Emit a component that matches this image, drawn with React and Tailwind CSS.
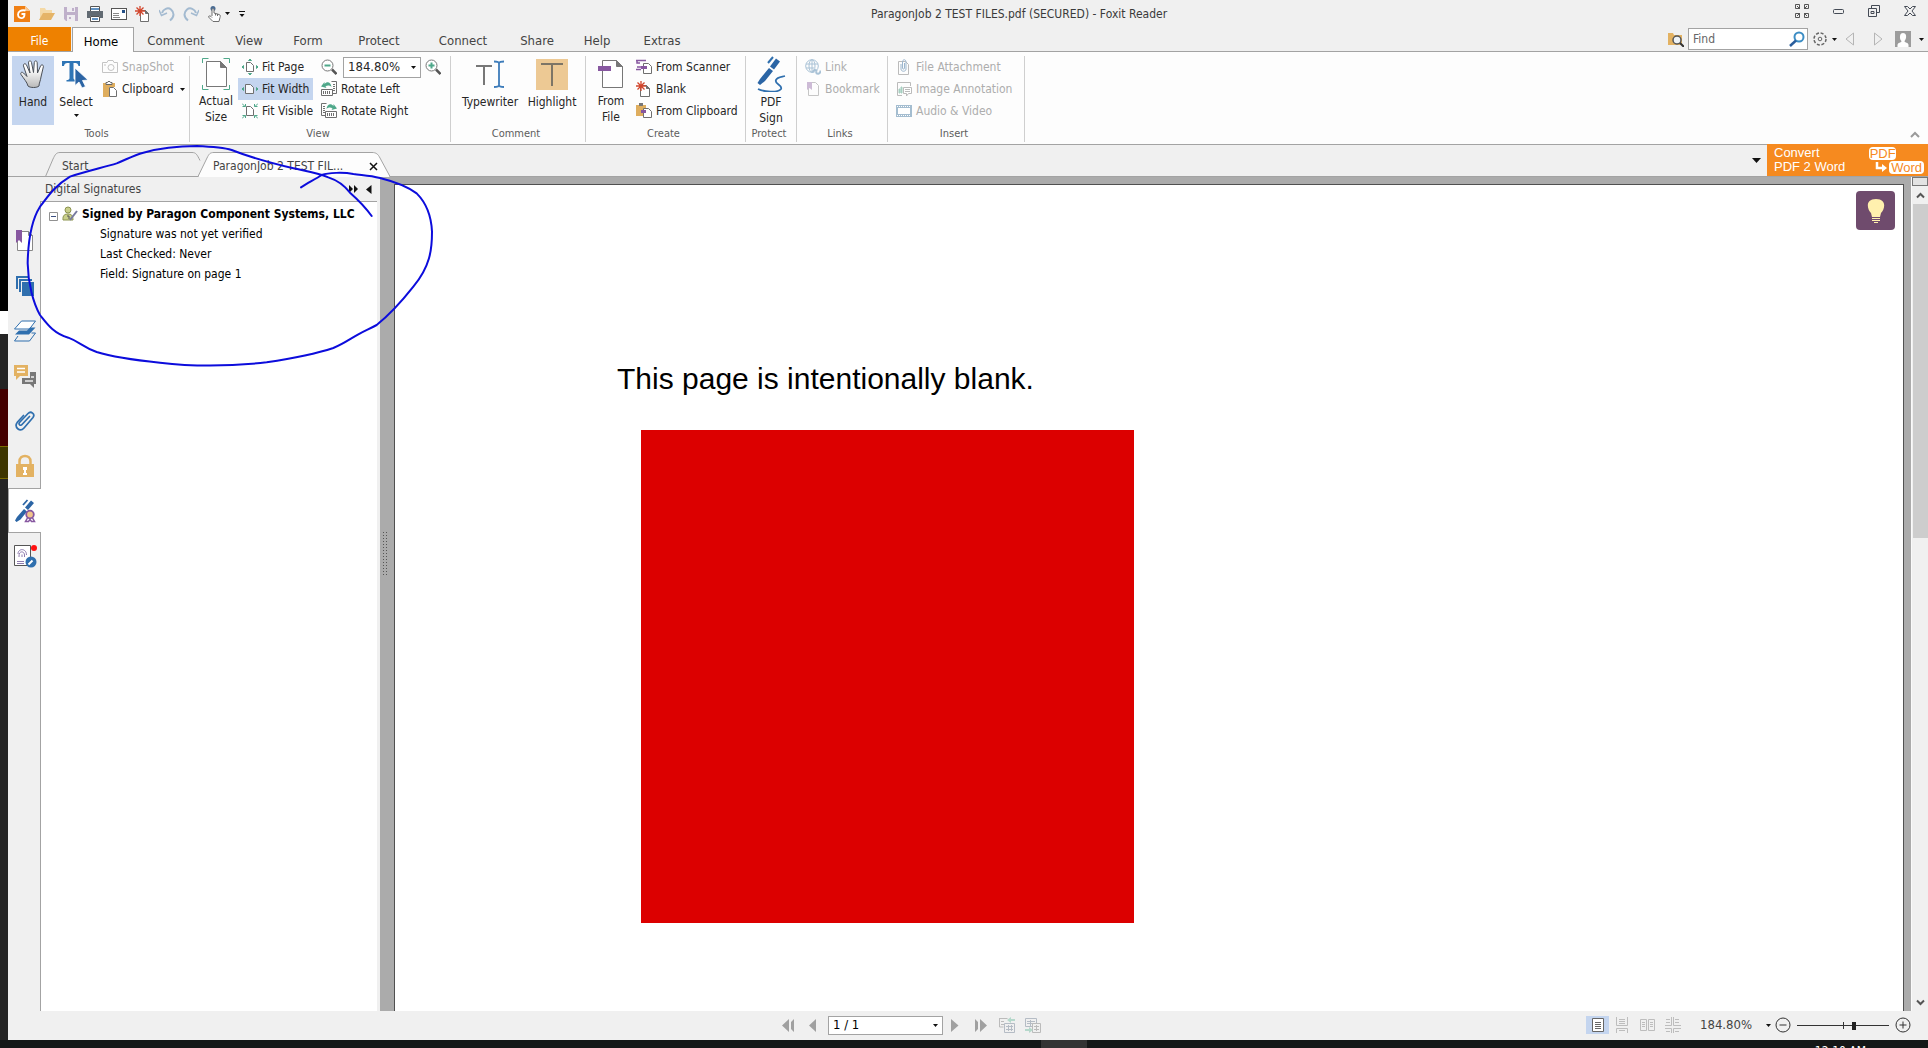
import React, { useState } from 'react';

const GREY = '#6f6f6f';
const GREEN = '#4fa88a';
const BLUE = '#2f6fae';
const PURPLE = '#8757a0';
const SAND = '#e3b262';

function Svg({ w = 16, h = 16, children, className = '', sw = 1 }) {
  return (
    <svg width={w} height={h} viewBox={`0 0 ${w} ${h}`} fill="none" stroke={GREY} strokeWidth={sw} className={`shrink-0 ${className}`} aria-hidden="true">
      {children}
    </svg>
  );
}

function Caret({ className = '' }) {
  return (
    <svg width="5" height="3" viewBox="0 0 5 3" className={`shrink-0 ${className}`} aria-hidden="true">
      <path d="M0 0h5L2.5 3z" fill="#111" />
    </svg>
  );
}

// small page outline with a folded corner
const pageAt = (x, y, w, h, f = 4) => `M${x} ${y}h${w - f}l${f} ${f}v${h - f}h${-w}z`;
const foldAt = (x, y, w, f = 4) => `M${x + w - f} ${y}l${f} ${f}h${-f}z`;

function Burst({ x = 5, y = 5 }) {
  return (
    <g transform={`translate(${x} ${y})`} stroke="#d2452c" strokeWidth="1.3">
      <path d="M0-5V5M-5 0H5M-3.5-3.5l7 7M3.5-3.5l-7 7" />
    </g>
  );
}

const icons = {
  logo: (
    <Svg w={18} h={18} className="-ml-px">
      <path d="M1 1h11l5 5v11H1z" fill="#f07f13" stroke="none" />
      <path d="M12 1l5 5h-5z" fill="#fbc890" stroke="none" />
      <path d="M12.500 5.500C8 4.500 5 6.500 5 9.500S7.500 13.500 9.500 13 11.500 11 11.500 9H8.500" stroke="#fff" strokeWidth="1.800" />
    </Svg>
  ),
  open: (
    <Svg>
      <path d="M1 13V2h5l1 2h6v3H5z" fill="#f4d9a6" stroke="none" />
      <path d="M0 14l4-7h12l-4 7z" fill="#e5b467" stroke="none" />
    </Svg>
  ),
  save: (
    <Svg>
      <path d="M1 1h14v14H3l-2-2z" fill="#bfb0ca" stroke="none" />
      <path d="M4 1h8v5H4zM4 9h8v6H4z" fill="#efedf1" stroke="none" />
      <path d="M9 2h2v3H9zM6 11v2h2v-2z" fill="#bfb0ca" stroke="none" />
    </Svg>
  ),
  print: (
    <Svg>
      <path d="M3.500 5V.5h9V5M3.500 10.500v5h9v-5z" fill="#fff" stroke="#555" />
      <path d="M0 5h16v7h-3v-2H3v2H0z" fill="#626b73" stroke="none" />
      <path d="M4 3h8M5 13h6" stroke={BLUE} strokeWidth="1.500" />
    </Svg>
  ),
  mail: (
    <Svg>
      <rect x=".5" y="2.500" width="15" height="11" fill="#fff" stroke="#555" />
      <path d="M2 7.500h6M2 9.500h6M2 11.500h7" stroke="#888" />
      <path d="M11 4h3v3h-3z" fill="#244f86" stroke="none" />
    </Svg>
  ),
  fresh: (
    <Svg>
      <path d={pageAt(5.5, 4.5, 8, 11, 3)} fill="#fff" />
      <path d={foldAt(5.5, 4.5, 8, 3)} fill={GREY} />
      <Burst x={5} y={5} />
    </Svg>
  ),
  undo: (
    <Svg sw={2}>
      <path d="M3 7C4 3 9 1 12 3.500s4 7-1 11" stroke="#a3bad0" />
      <path d="M0 4l2.500 5.500L8 7" stroke="#a3bad0" strokeWidth="1.500" />
    </Svg>
  ),
  redo: (
    <Svg sw={2}>
      <path d="M13 7C12 3 7 1 4 3.500s-4 7 1 11" stroke="#a3bad0" />
      <path d="M16 4l-2.500 5.500L8 7" stroke="#a3bad0" strokeWidth="1.500" />
    </Svg>
  ),
  touch: (
    <Svg>
      <circle cx="6" cy="2.500" r="2.500" fill="#4a6c93" stroke="none" />
      <path d="M5 10V3.500c0-1 2-1 2 0V7l5 1.500c1.500.5 1.500 1.500 1 3l-1 4H6L1.500 11c0-1.500 2-1.500 3.500.5M8.500 7.500v2M10.500 8v2" fill="#fff" />
    </Svg>
  ),
  more: (
    <Svg w={8} h={8}>
      <path d="M1 1.500h6" stroke="#111" />
      <path d="M1.500 4h5L4 7z" fill="#111" stroke="none" />
    </Svg>
  ),
  hand: (
    <Svg w={28} h={30}>
      <defs>
        <linearGradient id="palm" x1="0" y1="0" x2="0" y2="1">
          <stop offset="0.300" stopColor="#fff" />
          <stop offset="1" stopColor="#b8b8b8" />
        </linearGradient>
      </defs>
      <path
        d="M9 27C8 23 5 20 2 15.500 1 13.500 3 12.500 4.500 14L8 17.500 4.500 7C4 4.500 6.500 4 7.500 6L11 14 9.500 4C9.300 1.500 12 1 12.500 3.500L14.500 13.500 15.300 3.500C15.500 1.200 18.300 1.500 18.200 3.800L18.500 14 21.500 7C22.500 5 25 6 24.300 8L22 18C21.500 22 20 24 20 27 18 29 11 29 9 27z"
        fill="url(#palm)"
        stroke="#4b5058"
      />
    </Svg>
  ),
  select: (
    <Svg w={28} h={30}>
      <path d="M0 2h18v5h-1.500c-.5-2.500-1.500-3-5-3v15c0 1.500 1 2 3 2v1.500H4.500V21c2 0 3-.5 3-2V4c-4 0-5 .5-5.500 3H0z" fill="#2f75b5" stroke="none" />
      <path d="M13 9l13 12-5.500.5 3 6-3.500 1.500-3-6-4 3.500z" fill="#2b64a4" stroke="#fff" strokeWidth=".8" />
    </Svg>
  ),
  camera: (
    <Svg>
      <path d="M.5 3.500H5l1-2h5l1 2h3.500v10H.5z" stroke="#c4c4c4" />
      <circle cx="9" cy="8.500" r="3" stroke="#c4c4c4" />
      <path d="M2 6h2" stroke="#c4c4c4" />
    </Svg>
  ),
  clipboard: (
    <Svg>
      <path d="M1 2h12v4H7v10H1z" fill="#dfae5f" stroke="none" />
      <path d="M4 3.500V1.500h1.500C5.500 0 8.500 0 8.500 1.500H10v2z" fill="#fff" stroke="#666" />
      <path d={pageAt(7.500, 6.500, 7, 9, 3)} fill="#fff" />
    </Svg>
  ),
  actual: (
    <Svg w={28} h={32}>
      <path d="M.5 5V.5h6M21.500.5h6V5M.5 27v4.500h6M21.500 31.500h6V27" stroke={GREEN} />
      <path d={pageAt(4.500, 3.500, 20, 25, 6)} fill="#fff" stroke="#777" />
      <path d={foldAt(4.500, 3.500, 20, 6)} fill="#777" stroke="#777" />
    </Svg>
  ),
  fitPage: (
    <Svg>
      <path d={pageAt(4.500, 3.500, 7, 9, 3)} fill="#fff" />
      <path d="M6.500 1.500L8 0l1.500 1.500zM6.500 14.500L8 16l1.500-1.500zM1.500 6.500L0 8l1.500 1.500zM14.500 6.500L16 8l-1.500 1.500z" fill={GREEN} stroke={GREEN} />
    </Svg>
  ),
  fitWidth: (
    <Svg>
      <path d={pageAt(3.500, 3.500, 8, 9, 3)} fill="#f6f8fc" />
      <path d="M1.500 6.500L0 8l1.500 1.500zM14.500 6.500L16 8l-1.500 1.500z" fill={GREEN} stroke={GREEN} />
    </Svg>
  ),
  fitVisible: (
    <Svg>
      <path d={pageAt(4.500, 3.500, 7, 9, 3)} fill="#fff" />
      <path d="M0 .5l3 3M.5 3.500h3V1M16 .5l-3 3M15.500 3.500h-3V1M0 15.500l3-3M.5 12.500h3V15M16 15.500l-3-3M15.500 12.500h-3V15" stroke={GREEN} />
    </Svg>
  ),
  zoomOut: (
    <Svg>
      <circle cx="6.500" cy="6.500" r="5.500" fill="#fff" stroke="#777" />
      <path d="M3.500 6.500h6" stroke={GREEN} strokeWidth="2" />
      <path d="M11 10.500l4.500 4.500" stroke="#555" strokeWidth="2.500" />
    </Svg>
  ),
  zoomIn: (
    <Svg>
      <circle cx="6.500" cy="6.500" r="5.500" fill="#fff" stroke="#777" />
      <path d="M3.500 6.500h6M6.500 3.500v6" stroke={GREEN} strokeWidth="2" />
      <path d="M11 10.500l4.500 4.500" stroke="#555" strokeWidth="2.500" />
    </Svg>
  ),
  rotateLeft: (
    <Svg>
      <path d="M10.500.5h5v12h-4M12 3.500h2M12 5.500h2M12 7.500h2M12 9.500h2" />
      <path d="M.5 8.500h11v6H.5zM2.500 10v3M4.500 10v3M6.500 10v3M8.500 10v3" fill="#fff" />
      <path d="M0 5.500L3.500 1v2C6 0 10 1 10.500 6 9 4 6 4 4.500 5.500L5.500 7z" fill={GREEN} stroke="none" />
    </Svg>
  ),
  rotateRight: (
    <Svg>
      <path d="M5.500.5h-5v12h4M2 3.500h2M2 5.500h2M2 7.500h2M2 9.500h2" />
      <path d="M4.500 8.500h11v6h-11zM6.500 10v3M8.500 10v3M10.500 10v3M12.500 10v3" fill="#fff" />
      <path d="M16 5.500L12.500 1v2C10 0 6 1 5.500 6 7 4 10 4 11.500 5.500L10.500 7z" fill={GREEN} stroke="none" />
    </Svg>
  ),
  typewriter: (
    <Svg w={28} h={28}>
      <path d="M0 6h16M8 6v19" stroke="#777" strokeWidth="2" />
      <path d="M23 3v23M18 1.500c3 0 5 .5 5 2 0-1.500 2-2 5-2M18 27c3 0 5-.5 5-2 0 1.500 2 2 5 2" stroke="#3d7cba" strokeWidth="1.800" />
    </Svg>
  ),
  highlight: (
    <Svg w={32} h={31}>
      <path d="M0 0h32v31H0z" fill="#edc994" stroke="none" />
      <path d="M5 5h22M16 5v22" stroke="#7d7566" strokeWidth="2" />
    </Svg>
  ),
  fromFile: (
    <Svg w={26} h={30}>
      <path d={pageAt(4.500, 1.500, 20, 27, 6)} fill="#fff" stroke="#777" />
      <path d={foldAt(4.500, 1.500, 20, 6)} fill="#777" stroke="#777" />
      <path d="M0 7h13v5H0z" fill={PURPLE} stroke="none" />
    </Svg>
  ),
  scanner: (
    <Svg>
      <path d="M0 1.500h10M1 1v3h3M1 8h4M0 10.500h5" stroke={PURPLE} strokeWidth="1.500" />
      <path d={pageAt(7.500, 4.500, 8, 10, 3)} fill="#fff" />
      <path d="M5 7h6v3H5z" fill={PURPLE} stroke="none" />
    </Svg>
  ),
  blank: (
    <Svg>
      <path d={pageAt(4.500, 4.500, 9, 11, 3)} fill="#fff" />
      <path d={foldAt(4.500, 4.500, 9, 3)} fill={GREY} />
      <Burst x={5} y={5} />
    </Svg>
  ),
  fromClip: (
    <Svg>
      <path d="M0 2h10v3H8v8H0z" fill="#dfae5f" stroke="none" />
      <path d="M3 0h4v3H3z" fill="#777" stroke="none" />
      <path d={pageAt(7.500, 5.500, 8, 9, 3)} fill="#fff" />
      <path d="M5 7h5v3H5z" fill={PURPLE} stroke="none" />
    </Svg>
  ),
  sign: (
    <Svg w={30} h={36}>
      <path d="M12 7l5-6" stroke={BLUE} strokeWidth="2" />
      <path d="M20 2.500l4 3-6 8-4-3zM13 12l4 3-8 10-5 4-2.500-2L4 23z" fill="#2b65a5" stroke="none" />
      <path d="M2 33c6 3 20 4 23 0 2-4-7-5-5-9 1-3 5-3 9-4" stroke={BLUE} strokeWidth="1.800" />
    </Svg>
  ),
  link: (
    <Svg>
      <g stroke="#a9c2d6">
        <circle cx="7" cy="7" r="6.300" />
        <ellipse cx="7" cy="7" rx="3" ry="6.300" />
        <path d="M1 5h12M1 9h8M7 1v12" />
        <path d="M8 13.500c0-3 3-3 4-1M15.500 11.500c0 4-4 4-4.500 1.500" strokeWidth="2" />
      </g>
    </Svg>
  ),
  bookmark: (
    <Svg>
      <path d={pageAt(3.500, 1.500, 10, 13, 3)} stroke="#c6c6c6" />
      <path d="M2 1h5v8L4.500 7 2 9z" fill="#cdbbd6" stroke="none" />
    </Svg>
  ),
  attachment: (
    <Svg>
      <path d={pageAt(2.500, 2.500, 10, 13, 3)} stroke="#bbb" />
      <path d="M5 5v5c0 3 5 3 5 0V3c0-3-3.500-3-3.500 0v6c0 1.500 2 1.500 2 0V4" stroke="#9db7ce" />
    </Svg>
  ),
  imageNote: (
    <Svg>
      <path d="M6 14.500H1.500V1.500h13V5" stroke="#bbb" />
      <path d="M3 12V8h1v4zM5 12V6h1v6z" fill="#a6cfc0" stroke="#a6cfc0" />
      <path d="M7.500 6.500h8v6h-3l-2 2.500v-2.500h-3zM9 8.500h5M9 10.500h5" stroke="#bbb" fill="#fff" />
    </Svg>
  ),
  video: (
    <Svg>
      <path d="M0 2h16v12H0z" fill="#a4bdd0" stroke="none" />
      <path d="M2 5h12v6H2z" fill="#fff" stroke="none" />
      <path d="M1 3.500h14M1 12.500h14" stroke="#fff" strokeDasharray="1 1" />
    </Svg>
  ),
};

// ---- left navigation icons

const navIcons = [
  {
    name: 'Bookmarks',
    icon: (
      <Svg w={20} h={22}>
        <path d={pageAt(2.500, 1.500, 15, 19, 4)} fill="#fff" stroke="#888" />
        <path d={foldAt(2.500, 1.500, 15, 4)} fill="#888" stroke="#888" />
        <path d="M1 0h6v13l-3-3-3 3z" fill={PURPLE} stroke="none" />
      </Svg>
    ),
  },
  {
    name: 'Pages',
    icon: (
      <Svg w={20} h={22}>
        <path d="M2 14V2h12M5 17V5h12" stroke={BLUE} strokeWidth="2" />
        <path d="M7 7h12v14H7z" fill={BLUE} stroke="none" />
      </Svg>
    ),
  },
  {
    name: 'Layers',
    icon: (
      <Svg w={24} h={22}>
        <path d="M8.500 1h14l-6 8h-15z" fill="#fff" stroke={BLUE} />
        <path d="M2 14.500h14l6.500-7H17l-3 3H6z" fill={BLUE} stroke="none" />
        <path d="M5 16l-3.500 5h15l6-8h-4" stroke={BLUE} />
      </Svg>
    ),
  },
  {
    name: 'Comments',
    icon: (
      <Svg w={24} h={24}>
        <path d="M1 1h14v11H7l-4 4v-4H1z" fill={SAND} stroke="none" />
        <path d="M4 4.500h8M4 8h8" stroke="#fff" strokeWidth="1.500" />
        <path d="M17 8h6v12h-2v4l-4-4H9v-6h8z" fill="#777" stroke="none" />
        <path d="M12 17h8M18 13h3" stroke="#eee" strokeWidth="1.500" />
      </Svg>
    ),
  },
  {
    name: 'Attachments',
    icon: (
      <Svg w={20} h={22}>
        <path
          d="M14.500 6.500L7 14.500c-1.500 2-4-.5-2.500-2L13 3.500c3-3 7.500.5 5 4L9 18c-4 4.500-10.500-.5-6.500-6L8.500 5.500"
          stroke={BLUE}
          strokeWidth="1.700"
          strokeLinecap="round"
        />
      </Svg>
    ),
  },
  {
    name: 'Security',
    icon: (
      <Svg w={20} h={24}>
        <path d="M4.500 11V7.500c0-7.500 11-7.500 11 0V11" stroke={SAND} strokeWidth="2.500" />
        <path d="M1 10h18v13H1z" fill={SAND} stroke="none" />
        <path d="M8 13h4v3h-1v3h1v2H8v-2h1v-3H8z" fill="#fff" stroke="none" />
      </Svg>
    ),
  },
  {
    name: 'Digital Signatures',
    icon: (
      <Svg w={22} h={24}>
        <path d="M8 6l4.500-5" stroke="#2b65a5" strokeWidth="1.800" />
        <path d="M16 1.500l3 2.500-6 7-3-2.500zM9 10l3 2.500-6.500 8L1.500 23 0 21.500 2 18z" fill="#2b65a5" stroke="none" />
        <path d="M13 18l-2.500 4.500h3l1.500-2 1.500 2h3L17 18" fill="#fff" stroke={PURPLE} strokeWidth="1.500" />
        <circle cx="15" cy="15.500" r="3.800" fill="#f1c48a" stroke={PURPLE} strokeWidth="1.800" />
      </Svg>
    ),
  },
  {
    name: 'Fingerprint',
    icon: (
      <Svg w={24} h={24}>
        <path d="M1.500 1.500h16v20h-16z" fill="#fff" stroke="#555" />
        <path d="M5 10c0-6 8.500-6 8.500 1M6 13c-.5-7 5.500-6 5.500-2v2M9 10.500V13M4 17.500h7M4 19.500h7" stroke="#8f7cae" />
        <circle cx="21" cy="4" r="3" fill="#f11" stroke="none" />
        <circle cx="18" cy="18" r="5.500" fill={BLUE} stroke="none" />
        <path d="M15.500 20.500l4-4" stroke="#fff" strokeWidth="2" />
      </Svg>
    ),
  },
];

// ---- ribbon

function BigButton({ icon, lines, active, caret, className = '' }) {
  return (
    <button className={`flex h-[69px] shrink-0 flex-col items-center ${active ? 'bg-[#c4d5ef]' : ''} ${className}`}>
      <span className="mb-0.5 flex h-9 items-center justify-center">{icon}</span>
      {lines.map((l) => (
        <span key={l} className="h-4 leading-4 whitespace-nowrap">{l}</span>
      ))}
      {caret && <Caret className="mt-1" />}
    </button>
  );
}

function SmallButton({ icon, label, active, disabled, caret }) {
  return (
    <button
      disabled={disabled}
      className={`flex h-[22px] items-center gap-1 px-1 whitespace-nowrap ${active ? 'bg-[#c4d5ef]' : ''} ${disabled ? 'text-[#adadad]' : ''}`}
    >
      {icon}
      <span>{label}</span>
      {caret && <Caret className="ml-0.5" />}
    </button>
  );
}

function Group({ title, className, children }) {
  return (
    <section className={`flex shrink-0 flex-col border-r border-[#cfcfcf] ${className}`}>
      <div className="flex h-[71px] items-start pl-1">{children}</div>
      <h2 className="mt-auto h-4 pr-1 text-center text-[11px] leading-4 text-[#5c5c5c]">{title}</h2>
    </section>
  );
}

const menu = [
  { label: 'Comment', width: 'w-[84px]' },
  { label: 'View', width: 'w-[62px]' },
  { label: 'Form', width: 'w-[56px]' },
  { label: 'Protect', width: 'w-[86px]' },
  { label: 'Connect', width: 'w-[82px]' },
  { label: 'Share', width: 'w-[66px]' },
  { label: 'Help', width: 'w-[54px]' },
  { label: 'Extras', width: 'w-[76px]' },
];

function TitleBar() {
  const quick = ['open', 'save', 'print', 'mail', 'fresh', 'undo', 'redo'];
  return (
    <header className="flex h-[27px] items-center pl-[6px] text-[#3a3a3a]">
      <div className="flex items-center gap-2">
        {icons.logo}
        {quick.map((k) => (
          <button key={k} aria-label={k}>{icons[k]}</button>
        ))}
        <button aria-label="Touch mode" className="flex items-center gap-0.5">{icons.touch}<Caret /></button>
        <button aria-label="Customize toolbar">{icons.more}</button>
      </div>
      <h1 className="flex-1 pl-2 text-center text-xs">ParagonJob 2 TEST FILES.pdf (SECURED) - Foxit Reader</h1>
      <div className="flex h-full items-start">
        <button aria-label="Full screen" className="flex h-[22px] w-9 items-center justify-center">
          <Svg w={14} h={14}>
            <path d="M.5.5h4v4h-4zM9.500.5h4v4h-4zM.5 9.500h4v4h-4zM9.500 9.500h4v4h-4zM2 2l3 3M12 2L9 5M2 12l3-3M12 12L9 9" stroke="#555" />
          </Svg>
        </button>
        <button aria-label="Minimize" className="flex h-[22px] w-9 items-center justify-center">
          <Svg w={11} h={5}><rect x=".5" y=".5" width="10" height="4" rx="1" stroke="#444a55" /></Svg>
        </button>
        <button aria-label="Restore" className="flex h-[22px] w-9 items-center justify-center">
          <Svg w={12} h={12}>
            <path d="M3.500 3V.5h8v7H9M.5 3.500h8v8h-8zM3 6.500h3v2H3z" stroke="#444a55" />
          </Svg>
        </button>
        <button aria-label="Close window" className="flex h-[22px] w-9 items-center justify-center">
          <Svg w={12} h={10}>
            <path d="M.5.5h3L6 3 8.500.5h3L8 5l3.500 4.500h-3L6 7 3.500 9.500h-3L4 5z" stroke="#444a55" />
          </Svg>
        </button>
      </div>
    </header>
  );
}

function MenuBar() {
  return (
    <nav className="flex h-[25px] items-stretch border-b border-[#a3a3a3] text-[13px] text-[#444]">
      <button className="w-[63px] bg-[#ee8100] pt-[3px] text-xs text-white">File</button>
      <button className="-mb-px ml-px w-[62px] border border-b-0 border-[#a3a3a3] bg-[#fdfdfd] pt-[3px] pr-1 text-black">Home</button>
      {menu.map((m) => (
        <button key={m.label} className={`shrink-0 pt-[3px] ${m.width}`}>{m.label}</button>
      ))}
      <div className="ml-auto flex items-center pr-1">
        <button aria-label="Search folder" className="mr-1">
          <Svg>
            <path d="M0 2h5l1 2h8v10H0z" fill={SAND} stroke="none" />
            <circle cx="9" cy="9" r="4" fill="#eef3f7" stroke="#555" strokeWidth="1.500" />
            <path d="M12 12l4 4" stroke="#333" strokeWidth="2" />
          </Svg>
        </button>
        <label className="flex h-[22px] w-[120px] items-center border border-[#a3a3a3] bg-white pr-0.5 pl-1 text-xs">
          <input aria-label="Find" placeholder="Find" className="w-0 flex-1 bg-transparent outline-none placeholder:text-[#666]" />
          <Svg>
            <circle cx="10" cy="6" r="4.500" stroke="#3c8dc4" strokeWidth="2" />
            <path d="M7 9.500L1 15" stroke="#2a5d9c" strokeWidth="2.500" />
          </Svg>
        </label>
        <button aria-label="Settings" className="ml-1 flex items-center gap-1">
          <Svg>
            <circle cx="8" cy="8" r="6" stroke="#666" strokeWidth="1.500" strokeDasharray="3 1.700" />
            <circle cx="8" cy="8" r="1.800" stroke="#666" />
          </Svg>
          <Caret />
        </button>
        <button aria-label="Previous result" className="ml-2">
          <Svg w={10} h={14}><path d="M8.500 1v12L1 7z" stroke="#b5b5b5" /></Svg>
        </button>
        <button aria-label="Next result" className="ml-[18px]">
          <Svg w={10} h={14}><path d="M1.500 1v12L9 7z" stroke="#b5b5b5" /></Svg>
        </button>
        <button aria-label="Account" className="ml-3 flex items-center gap-2">
          <Svg>
            <path d="M0 0h16v16H0z" fill="#9c9c9c" stroke="none" />
            <path d="M8 2c3 0 3.500 3 3 5s-1.500 2.500-1.500 3.500 4 1 4 3.500v2h-11v-2c0-2.500 4-2.500 4-3.500S5 9 5 7 5 2 8 2z" fill="#fff" stroke="none" />
          </Svg>
          <Caret />
        </button>
      </div>
    </nav>
  );
}

function Ribbon() {
  const [zoom, setZoom] = useState('184.80%');
  return (
    <div className="flex h-[93px] border-b border-[#a3a3a3] bg-[#fdfdfd] pt-1 pb-0.5 text-xs text-[#262626]">
      <Group title="Tools" className="w-[182px]">
        <BigButton icon={icons.hand} lines={['Hand']} active className="w-[42px]" />
        <BigButton icon={icons.select} lines={['Select']} caret className="w-11" />
        <div>
          <SmallButton icon={icons.camera} label="SnapShot" disabled />
          <SmallButton icon={icons.clipboard} label="Clipboard" caret />
        </div>
      </Group>
      <Group title="View" className="w-[261px]">
        <BigButton icon={icons.actual} lines={['Actual', 'Size']} className="w-11" />
        <div className="w-[79px]">
          <SmallButton icon={icons.fitPage} label="Fit Page" />
          <SmallButton icon={icons.fitWidth} label="Fit Width" active />
          <SmallButton icon={icons.fitVisible} label="Fit Visible" />
        </div>
        <div>
          <div className="flex h-[22px] items-center pl-1">
            <button aria-label="Zoom out">{icons.zoomOut}</button>
            <div className="relative mr-1 ml-1.5 flex h-[21px] w-[78px] items-center border border-[#a3a3a3] bg-white">
              <select aria-label="Zoom" value={zoom} onChange={(e) => setZoom(e.target.value)} className="size-full appearance-none pl-1 text-[13px] leading-4 outline-none">
                <option>184.80%</option>
                <option>100.00%</option>
              </select>
              <Caret className="pointer-events-none absolute right-1" />
            </div>
            <button aria-label="Zoom in">{icons.zoomIn}</button>
          </div>
          <SmallButton icon={icons.rotateLeft} label="Rotate Left" />
          <SmallButton icon={icons.rotateRight} label="Rotate Right" />
        </div>
      </Group>
      <Group title="Comment" className="w-[135px]">
        <BigButton icon={icons.typewriter} lines={['Typewriter']} className="w-[70px]" />
        <BigButton icon={icons.highlight} lines={['Highlight']} className="w-[54px]" />
      </Group>
      <Group title="Create" className="w-[160px]">
        <BigButton icon={icons.fromFile} lines={['From', 'File']} className="w-[42px]" />
        <div>
          <SmallButton icon={icons.scanner} label="From Scanner" />
          <SmallButton icon={icons.blank} label="Blank" />
          <SmallButton icon={icons.fromClip} label="From Clipboard" />
        </div>
      </Group>
      <Group title="Protect" className="w-[51px]">
        <BigButton icon={icons.sign} lines={['PDF', 'Sign']} className="w-[42px]" />
      </Group>
      <Group title="Links" className="w-[91px]">
        <div>
          <SmallButton icon={icons.link} label="Link" disabled />
          <SmallButton icon={icons.bookmark} label="Bookmark" disabled />
        </div>
      </Group>
      <Group title="Insert" className="w-[137px]">
        <div>
          <SmallButton icon={icons.attachment} label="File Attachment" disabled />
          <SmallButton icon={icons.imageNote} label="Image Annotation" disabled />
          <SmallButton icon={icons.video} label="Audio & Video" disabled />
        </div>
      </Group>
      <button aria-label="Collapse ribbon" className="mt-auto mr-2 mb-1 ml-auto">
        <Svg w={10} h={7} sw={2}><path d="M1 6l4-4 4 4" stroke="#9a9a9a" /></Svg>
      </button>
    </div>
  );
}

function DocTabs() {
  return (
    <div className="flex h-8 items-end border-b border-[#a3a3a3] pl-[37px] text-xs text-[#444]">
      <button className="relative h-6 w-[158px] pt-1 pl-[17px] text-left">
        <svg className="absolute -bottom-px left-0" width="158" height="25" fill="none" stroke="#a3a3a3" aria-hidden="true">
          <path d="M.5 24.500L8 7c2-4 3-6.500 7-6.500h132c4 0 5 2 8 8" />
        </svg>
        <span className="relative">Start</span>
      </button>
      <div className="relative -ml-1.5 flex h-6 w-[194px] items-center pt-1 pl-4">
        <svg className="absolute -bottom-px left-0" width="194" height="25" stroke="#a3a3a3" aria-hidden="true">
          <path d="M1 24.500L10 6c2-4 3-5.500 7-5.500h158c4 0 6 1.500 8 5.500l10 18.500" fill="#fdfdfd" />
          <path d="M2 24.500h190" stroke="#fdfdfd" />
        </svg>
        <button className="relative w-[142px] text-left">ParagonJob 2 TEST FIL...</button>
        <button aria-label="Close tab" className="relative ml-3.5">
          <Svg w={9} h={9} sw={1.5}><path d="M1 1l7 7M8 1L1 8" stroke="#111" /></Svg>
        </button>
      </div>
      <div className="ml-auto flex h-8 items-stretch">
        <button aria-label="Open documents" className="mr-1.5">
          <Svg w={9} h={5}><path d="M0 0h9L4.500 5z" fill="#111" stroke="none" /></Svg>
        </button>
        <a href="#convert" className="flex w-[161px] items-center justify-between bg-[#f68a1f] pr-1 pl-[7px] font-['Liberation_Sans',sans-serif] text-[13px] leading-3.5 text-white">
          <span>Convert<br />PDF 2 Word</span>
          <span className="flex flex-col gap-px leading-[13px]">
            <span className="w-[27px] rounded-sm bg-white text-center text-[#f68a1f]">PDF</span>
            <span className="flex items-center gap-0.5 pl-1.5">
              <Svg w={12} h={10}><path d="M2 0v6h6" stroke="#fff" strokeWidth="2.500" /><path d="M7 2l5 4-5 4z" fill="#fff" stroke="none" /></Svg>
              <span className="rounded-sm bg-white px-0.5 text-[#f68a1f]">Word</span>
            </span>
          </span>
        </a>
      </div>
    </div>
  );
}

function SideNav({ active }) {
  return (
    <nav className="flex w-[33px] shrink-0 flex-col pt-6">
      <div className="h-[17px] border-r border-[#a3a3a3]" />
      {navIcons.map((n) => (
        <button
          key={n.name}
          aria-label={n.name}
          className={`flex h-[45px] shrink-0 items-center justify-center pl-0.5 ${n.name === active ? 'border-y border-l border-[#a3a3a3] bg-white' : 'border-r border-[#a3a3a3]'}`}
        >
          {n.icon}
        </button>
      ))}
      <div className="flex-1 border-r border-[#a3a3a3]" />
    </nav>
  );
}

const details = ['Signature was not yet verified', 'Last Checked: Never', 'Field: Signature on page 1'];

function SignaturePanel() {
  return (
    <aside className="flex w-[339px] shrink-0 flex-col pr-[3px] text-xs">
      <div className="flex h-[25px] shrink-0 items-center border-b border-[#a3a3a3] pr-[5px] pl-1 text-[#444]">
        <h2>Digital Signatures</h2>
        <button aria-label="Expand all" className="ml-auto">
          <Svg w={9} h={8}><path d="M0 0l4 4-4 4zM5 0l4 4-4 4z" fill="#111" stroke="none" /></Svg>
        </button>
        <button aria-label="Collapse panel" className="ml-2">
          <Svg w={6} h={9}><path d="M5.500 0v9L0 4.500z" fill="#111" stroke="none" /></Svg>
        </button>
      </div>
      <div className="flex-1 bg-white pt-0.5 text-black">
        <div className="flex h-5 items-center pl-2">
          <button aria-label="Collapse signature" className="mt-1">
            <Svg w={9} h={9}><path d="M.5.5h8v8h-8z" fill="#fff" stroke="#919191" /><path d="M2 4.500h5" stroke="#3b4f81" /></Svg>
          </button>
          <Svg className="ml-1">
            <circle cx="6" cy="4" r="3" fill="#c9cf8a" stroke="#8c9350" />
            <path d="M1 14c-.5-5 2-6 5-6s5 1 5 6z" fill="#c9cf8a" stroke="#8c9350" />
            <path d="M5 10h2v3" stroke="#555" />
            <path d="M8 14l7-9" stroke="#777aa0" strokeWidth="2" />
          </Svg>
          <strong className="ml-1 font-bold whitespace-nowrap">Signed by Paragon Component Systems, LLC</strong>
        </div>
        <ul>
          {details.map((d) => (
            <li key={d} className="h-5 pl-[59px] leading-5">{d}</li>
          ))}
        </ul>
      </div>
    </aside>
  );
}

function Viewer() {
  return (
    <main className="flex min-w-0 flex-1 bg-[#ababab]">
      <div className="flex w-3.5 shrink-0 items-center pl-[3px]">
        <Svg w={4} h={44} className="mb-20">
          <path d="M.5 0v44M3.500 0v44" stroke="#555" strokeDasharray="1 2" />
        </Svg>
      </div>
      <div className="mt-[7px] mr-[7px] flex flex-1 items-start justify-between border-x border-t border-[#505050] bg-white">
        <article className="pt-[173px] pl-[222px]">
          <p className="font-['Liberation_Sans',sans-serif] text-[30px] leading-[42px] text-black">This page is intentionally blank.</p>
          <div className="mt-[30px] ml-6 size-[493px] bg-[#dc0000]" />
        </article>
        <button aria-label="Tips" className="mt-1.5 mr-2 flex size-[39px] items-center justify-center rounded bg-[#6f4b6d]">
          <Svg w={18} h={26}>
            <path d="M9 1c11 0 9 10 5 14l-1 4H5l-1-4C0 11-2 1 9 1z" fill="#fff0ae" stroke="none" />
            <path d="M5 20.500h8M5 22.500h8M7 24.500h4" stroke="#fff0ae" />
          </Svg>
        </button>
      </div>
      <div className="flex w-[17px] shrink-0 flex-col items-center border-l border-[#fafafa] bg-[#f0f0f0]">
        <div className="h-[9px] w-full border border-[#777] bg-[#e3e3e3]" />
        <button aria-label="Scroll up" className="flex h-[18px] items-center">
          <Svg w={9} h={7} sw={2}><path d="M1 5.500L4.500 2 8 5.500" stroke="#555" /></Svg>
        </button>
        <div className="h-[40%] w-[15px] bg-[#cdcdcd]" />
        <button aria-label="Scroll down" className="mt-auto flex h-[18px] items-center">
          <Svg w={9} h={7} sw={2}><path d="M1 1.500L4.500 5 8 1.500" stroke="#555" /></Svg>
        </button>
      </div>
    </main>
  );
}

function StatusBar() {
  const [level, setLevel] = useState(63);
  return (
    <footer className="flex h-[29px] shrink-0 items-center pr-[17px] pb-px pl-[40%] text-[13px] text-[#444]">
      <div className="flex items-center pl-1.5">
        <button aria-label="First page"><Svg w={12} h={13}><path d="M7 0v13L0 6.500zM12 0v13L9 10V3z" fill="#a0a0a0" stroke="none" /></Svg></button>
        <button aria-label="Previous page" className="ml-[15px]"><Svg w={7} h={13}><path d="M7 0v13L0 6.500z" fill="#a0a0a0" stroke="none" /></Svg></button>
        <div className="relative ml-3 flex h-[19px] w-[115px] items-center border border-[#a3a3a3] bg-white">
          <select aria-label="Page" className="size-full appearance-none pl-1 leading-4 text-black outline-none">
            <option>1 / 1</option>
          </select>
          <Caret className="pointer-events-none absolute right-1" />
        </div>
        <button aria-label="Next page" className="ml-2"><Svg w={8} h={13}><path d="M0 0v13l7.500-6.500z" fill="#a0a0a0" stroke="none" /></Svg></button>
        <button aria-label="Last page" className="ml-4"><Svg w={12} h={13}><path d="M5 0v13l7-6.500zM0 0v13l3-3V3z" fill="#a0a0a0" stroke="none" /></Svg></button>
        <button aria-label="Previous view" className="ml-3">
          <Svg>
            <path d="M.5 1.500h8M.5 1v9h4M2 4.500h3M2 7.500h3" stroke="#bbb" />
            <path d="M5.500 6.500h10v9h-10zM7 9.500h7M7 12.500h7M9.500 8v6M12.500 8v6" stroke="#b5bcc5" />
            <path d="M8 3l4-3v2h4v2h-4v2z" fill="#b5d8cb" stroke="none" />
          </Svg>
        </button>
        <button aria-label="Next view" className="ml-2.5">
          <Svg>
            <path d="M.5 1.500h11v8H.5zM2 4.500h8M2 6.500h8M5.500 3v6" stroke="#b5bcc5" />
            <path d="M7.500 6.500h8v9h-8zM9 9.500h5M9 12.500h5M11.500 8v6" fill="#f0f0f0" stroke="#bbb" />
            <path d="M8 13l-4-3v2H0v2h4v2z" fill="#b5d8cb" stroke="none" />
          </Svg>
        </button>
      </div>
      <div className="ml-auto flex items-center">
        <button aria-label="Single page" className="flex h-[18px] w-[23px] items-center justify-center bg-[#c4d5ef]">
          <Svg w={12} h={14}><path d="M.5.5h11v13H.5zM3 4.500h6M3 6.500h6M3 8.500h6M3 10.500h6" fill="#fff" stroke="#666" /></Svg>
        </button>
        <button aria-label="Continuous" className="flex w-[25px] justify-center">
          <Svg w={12} h={16}><path d="M.5 0v8.500h11V0M.5 16v-4.500h11V16M3 2.500h6M3 4.500h6M3 6.500h6M3 13.500h6" stroke="#bdbdbd" /></Svg>
        </button>
        <button aria-label="Facing" className="flex w-[26px] justify-center">
          <Svg w={15} h={12}><path d="M.5.5h6v11h-6zM8.500.5h6v11h-6zM2 3.500h3M2 5.500h3M2 7.500h3M10 3.500h3M10 5.500h3M10 7.500h3" stroke="#bdbdbd" /></Svg>
        </button>
        <button aria-label="Continuous facing" className="flex w-[26px] justify-center">
          <Svg w={16} h={16}><path d="M0 8.500h6.500V0M16 8.500H8.500V0M0 11.500h6.500V16M16 11.500H8.500V16M1 2.500h4M1 5.500h4M10 2.500h4M10 5.500h4M1 14.500h4M10 14.500h4" stroke="#bdbdbd" /></Svg>
        </button>
        <button className="ml-3.5 flex w-[71px] items-center justify-between">184.80%<Caret /></button>
        <button aria-label="Decrease zoom" className="ml-1">
          <Svg><circle cx="8" cy="8" r="7" stroke="#333" /><path d="M4.500 8h7" stroke="#333" /></Svg>
        </button>
        <div className="relative mx-1.5 flex w-[92px] items-center">
          <span className="pointer-events-none absolute left-1/2 h-[7px] w-px bg-[#333]" />
          <input
            type="range"
            aria-label="Zoom level"
            value={level}
            onChange={(e) => setLevel(Number(e.target.value))}
            className="h-4 w-full appearance-none bg-transparent [&::-webkit-slider-runnable-track]:h-px [&::-webkit-slider-runnable-track]:bg-[#333] [&::-webkit-slider-thumb]:-mt-[3px] [&::-webkit-slider-thumb]:h-2 [&::-webkit-slider-thumb]:w-1 [&::-webkit-slider-thumb]:appearance-none [&::-webkit-slider-thumb]:bg-[#222]"
          />
        </div>
        <button aria-label="Increase zoom">
          <Svg><circle cx="8" cy="8" r="7" stroke="#333" /><path d="M4.500 8h7M8 4.500v7" stroke="#333" /></Svg>
        </button>
      </div>
    </footer>
  );
}

// freehand pen loop drawn over the signature panel
function PenMark() {
  return (
    <svg className="pointer-events-none absolute top-[140px] left-0" width="440" height="240" viewBox="0 0 1320 720" fill="none" stroke="#0c0cdc" strokeWidth="6" strokeLinecap="round" strokeLinejoin="round" aria-hidden="true">
      <path d="M903 142C925 128 945 118 965 105C985 98 1030 96 1060 102C1090 106 1110 106 1140 114C1180 124 1220 138 1250 160C1280 190 1294 230 1296 275C1296 330 1290 380 1240 440C1210 478 1180 515 1130 555C1110 566 1095 572 1075 583C1050 597 1030 612 1000 624C940 644 880 655 800 667C700 678 580 680 480 668C420 662 350 655 290 636C250 622 240 606 205 593C160 580 140 550 120 525C100 490 84 430 83 370C84 320 88 250 120 200C140 175 160 140 210 110C250 96 310 82 350 70C380 58 400 46 430 38C480 24 540 18 590 18C640 20 670 22 695 30C740 48 800 66 880 85C920 94 950 98 985 112C1010 120 1030 132 1050 158C1075 180 1095 200 1115 228" />
    </svg>
  );
}

export default function App() {
  return (
    <div className="relative flex h-screen flex-col overflow-hidden bg-[#141717] font-['DejaVu_Sans_Condensed','DejaVu_Sans',sans-serif]">
      <div className="flex min-h-0 flex-1">
        <div className="flex w-2 shrink-0 flex-col bg-[#242424]">
          <div className="h-[311px] bg-black" />
          <div className="h-[23px] bg-white" />
          <div className="h-[55px]" />
          <div className="h-[57px] bg-[#430000]" />
          <div className="h-[33px] border-y border-[#7a6a00] bg-[#3d3500]" />
        </div>
        <div className="flex min-w-0 flex-1 flex-col bg-[#f0f0f0]">
          <TitleBar />
          <MenuBar />
          <Ribbon />
          <DocTabs />
          <div className="flex min-h-0 flex-1">
            <SideNav active="Digital Signatures" />
            <SignaturePanel />
            <Viewer />
          </div>
          <StatusBar />
        </div>
      </div>
      <div className="flex h-2 shrink-0 overflow-hidden">
        <div className="ml-[54%] w-[46px] bg-[#333]" />
        <time className="mt-[5px] mr-[62px] ml-auto text-xs leading-3 text-white">12:10 AM</time>
      </div>
      <PenMark />
    </div>
  );
}
